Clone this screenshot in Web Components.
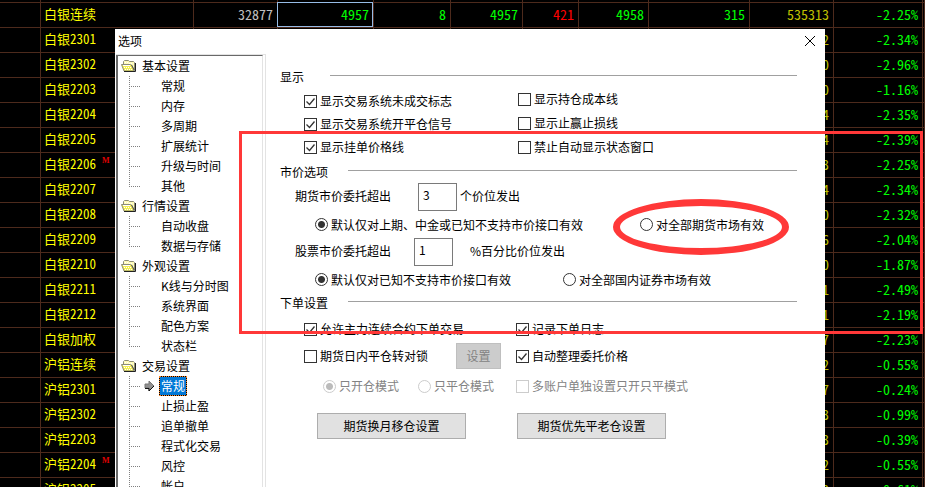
<!DOCTYPE html>
<html lang="zh-CN">
<head>
<meta charset="utf-8">
<meta name="viewport" content="width=device-width, initial-scale=1">
<title>选项</title>
<style>
  html, body { height: 100%; }
  body {
    margin: 0;
    position: relative;
    overflow: hidden;
    background: #000;
    color: #000;
    font: 12px/16px "Noto Sans CJK SC", sans-serif;
  }
  .mark-box {
    position: absolute;
    z-index: 3;
    box-sizing: border-box;
    inset: 131px 2px auto 239px;
    height: 203px;
    border: 3px solid #ff3838;
    pointer-events: none;
  }
</style>
</head>
<body>

<quote-table></quote-table>

<option-dialog heading="选项">
  <option-tree slot="nav"></option-tree>

  <option-group heading="显示" class="wide">
    <option-columns>
      <option-stack>
        <option-choice checked>显示交易系统未成交标志</option-choice>
        <option-choice checked>显示交易系统开平仓信号</option-choice>
        <option-choice checked>显示挂单价格线</option-choice>
      </option-stack>
      <option-stack loose>
        <option-choice>显示持仓成本线</option-choice>
        <option-choice>显示止赢止损线</option-choice>
        <option-choice>禁止自动显示状态窗口</option-choice>
      </option-stack>
    </option-columns>
  </option-group>

  <option-group heading="市价选项">
    <market-options></market-options>
  </option-group>

  <option-group heading="下单设置">
    <order-options></order-options>
  </option-group>
</option-dialog>

<div class="mark-box"></div>

<script>
(function() {
  // name, month, last digit of the open interest, change, main contract flag
  const QUOTES = [
    ['白银', '2301', '2', '-2.34%'],
    ['白银', '2302', '0', '-2.96%'],
    ['白银', '2203', '0', '-1.16%'],
    ['白银', '2204', '4', '-2.35%'],
    ['白银', '2205', '4', '-2.39%'],
    ['白银', '2206', '3', '-2.25%', true],
    ['白银', '2207', '4', '-2.34%'],
    ['白银', '2208', '0', '-2.32%'],
    ['白银', '2209', '6', '-2.04%'],
    ['白银', '2210', '0', '-1.87%'],
    ['白银', '2211', '1', '-2.49%'],
    ['白银', '2212', '1', '-2.19%'],
    ['白银加权', '', '7', '-2.23%'],
    ['沪铝连续', '', '2', '-0.55%'],
    ['沪铝', '2301', '7', '-0.24%'],
    ['沪铝', '2302', '3', '-0.99%'],
    ['沪铝', '2203', '3', '-0.39%'],
    ['沪铝', '2204', '2', '-0.55%', true],
    ['沪铝', '2205', '2', '-0.61%']
  ];

  const TREE = [
    ['基本设置', ['常规', '内存', '多周期', '扩展统计', '升级与时间', '其他']],
    ['行情设置', ['自动收盘', '数据与存储']],
    ['外观设置', ['K线与分时图', '系统界面', '配色方案', '状态栏']],
    ['交易设置', ['*常规', '止损止盈', '追单撤单', '程式化交易', '风控', '帐户']]
  ];

  function define(name, html, setup) {
    customElements.define(name, class extends HTMLElement {
      constructor() {
        super();
        this.attachShadow({ mode: 'open' });
      }

      connectedCallback() {
        this.shadowRoot.innerHTML = typeof html === 'function' ? html(this) : html;
        if (setup) setup(this, this.shadowRoot);
      }
    });
  }

  define('quote-table', () => {
    const rows = QUOTES.map(([name, month, oi, change, main]) => `
      <tr>
        <td></td>
        <td class="name">${name}${month}${main ? '<b>M</b>' : ''}</td>
        <td></td><td></td><td></td><td></td><td></td><td></td><td></td>
        <td class="oi">${oi}</td>
        <td>${change}</td>
        <td></td>
      </tr>`).join('');

    return `
      <style>
        :host { display: block; }
        table {
          width: 100%;
          table-layout: fixed;
          border-spacing: 0;
          color: #00ff00;
          font-size: 14px;
          line-height: 22px;
          font-feature-settings: "hwid";
        }
        td {
          box-sizing: border-box;
          height: 25px;
          padding: 0 4px 2px 3px;
          border: solid #4d2a1c;
          border-width: 0 1px 1px 0;
          text-align: right;
          white-space: nowrap;
        }
        td:first-child, td:last-child { padding: 0; }
        .edge td { height: 3px; }
        .name { text-align: left; color: #ffff00; font-size: 13px; }
        .name b {
          margin-left: 6px;
          color: #e00000;
          font: bold 8px/12px "Liberation Serif", serif;
          vertical-align: 6px;
        }
        .price { color: #c0c0c0; }
        .down { color: #ff0000; }
        .oi { color: #c0c000; }
        .current { position: relative; }
        .current::after {
          content: "";
          position: absolute;
          inset: -1px 0 0 -1px;
          border: 1px solid #97bce6;
        }
      </style>
      <table aria-label="行情">
        <colgroup>
          <col style="width: 41px"><col style="width: 153px"><col style="width: 84px">
          <col style="width: 96px"><col style="width: 77px"><col style="width: 72px">
          <col style="width: 56px"><col style="width: 70px"><col style="width: 101px">
          <col style="width: 84px"><col style="width: 89px"><col>
        </colgroup>
        <tr class="edge">${'<td></td>'.repeat(12)}</tr>
        <tr>
          <td></td>
          <td class="name">白银连续</td>
          <td class="price">32877</td>
          <td class="current">4957</td>
          <td>8</td>
          <td>4957</td>
          <td class="down">421</td>
          <td>4958</td>
          <td>315</td>
          <td class="oi">535313</td>
          <td>-2.25%</td>
          <td></td>
        </tr>
        ${rows}
      </table>`;
  });

  define('option-dialog', el => `
    <style>
      :host {
        position: absolute;
        z-index: 2;
        inset: 29px 100px 0 115px;
        display: flex;
        flex-direction: column;
        overflow: hidden;
        background: #fff;
      }
      header {
        box-sizing: border-box;
        display: flex;
        justify-content: space-between;
        align-items: center;
        height: 25px;
        flex: none;
        padding: 0 9px 2px 3px;
      }
      button { display: flex; padding: 0; border: 0; background: none; }
      .body { display: flex; flex: 1; min-height: 0; padding-left: 1px; }
      main { flex: 1; padding: 15px 28px 0 14px; }
    </style>
    <header>
      <span>${el.getAttribute('heading')}</span>
      <button type="button" aria-label="关闭">
        <svg width="12" height="12" viewBox="0 0 12 12" stroke="#000"><path d="M1 1l10 10M11 1L1 11"/></svg>
      </button>
    </header>
    <div class="body">
      <slot name="nav"></slot>
      <main><slot></slot></main>
    </div>`);

  const FOLDER = `
    <svg width="16" height="14" viewBox="0 0 16 14">
      <path fill="#fffbb8" stroke="#8c8c78" d="M2.500 6V2.500l1-1h4l1 1h4l1 1V11"/>
      <path fill="#f5f050" stroke="#8c8c78" d="M.5 5.500h9l1.500 1 2 5.500H3z"/>
      <path fill="#fff" shape-rendering="crispEdges" d="M4 3h1v1H4zM6 3h1v1H6zM8 4h1v1H8zM10 4h1v1h-1zM2 6h7v1H2zM3 8h1v1H3zM5 8h1v1H5zM7 8h1v1H7zM9 8h1v1H9zM4 10h1v1H4zM6 10h1v1H6zM8 10h1v1H8zM10 10h1v1h-1z"/>
      <path fill="none" stroke="#222" d="M3 12.500h11.500V4"/>
      <path fill="none" stroke="#555" d="M10.500 6l3 5.500"/>
    </svg>`;

  const ARROW = `
    <svg width="11" height="12" viewBox="0 0 11 12">
      <path d="M1 4h4V1l5 5-5 5V8H1z" fill="#909090" stroke="#777"/>
      <path d="M1 8.500h4V11l5-5" fill="none" stroke="#111"/>
    </svg>`;

  define('option-tree', () => `
    <style>
      :host {
        display: block;
        box-sizing: border-box;
        width: 150px;
        flex: none;
        border: solid #e3e3e3;
        border-width: 1px 1px 0 0;
        overflow: hidden;
      }
      nav {
        height: 100%;
        margin-right: 2px;
        border: solid #696969;
        border-width: 1px 1px 0 2px;
        border-right-color: #e3e3e3;
      }
      ul { margin: 0; padding: 0; list-style: none; }
      .group { display: flex; align-items: center; gap: 5px; height: 20px; padding-left: 3px; }
      .children { margin-left: 11px; }
      .children li { display: flex; align-items: center; height: 20px; }
      /* dotted elbow in front of each entry */
      .children li::before {
        content: "";
        align-self: flex-start;
        width: 10px;
        height: 10px;
        border: dotted #808080;
        border-width: 0 0 1px 1px;
      }
      .children li:not(:last-child) {
        background: repeating-linear-gradient(#808080 0 1px, transparent 1px 2px) 0 0 / 1px 100% no-repeat;
      }
      .pointer { width: 19px; display: flex; justify-content: center; }
      a { padding: 2px; color: inherit; text-decoration: none; }
      a[aria-current] {
        padding: 1px;
        border: 1px dotted #ff8728;
        background: linear-gradient(#0078d7 0 0) padding-box, #000;
        color: #fff;
      }
    </style>
    <nav><ul>${TREE.map(([name, items]) => `
      <li>
        <div class="group">${FOLDER}<span>${name}</span></div>
        <ul class="children">${items.map(item => {
          const on = item[0] === '*';
          return `<li><span class="pointer">${on ? ARROW : ''}</span><a href="#"${on ? ' aria-current="page"' : ''}>${item.replace('*', '')}</a></li>`;
        }).join('')}</ul>
      </li>`).join('')}
    </ul></nav>`);

  define('option-group', el => `
    <style>
      :host { display: block; }
      h2 {
        display: flex;
        align-items: center;
        gap: 20px;
        margin: 0;
        height: 16px;
        font: inherit;
      }
      h2::after { content: ""; flex: 1; height: 1px; margin-bottom: 3px; background: #a0a0a0; }
      :host(.wide) h2 { gap: 26px; }
    </style>
    <section><h2>${el.getAttribute('heading')}</h2><slot></slot></section>`);

  define('option-columns', `
    <style>
      :host {
        display: grid;
        grid-template-columns: 214px 1fr;
        align-items: end;
        padding: 6px 0 9px 24px;
      }
    </style>
    <slot></slot>`);

  define('option-stack', `
    <style>
      :host { display: flex; flex-direction: column; gap: 7px; }
      :host([loose]) { gap: 8px; }
    </style>
    <slot></slot>`);

  // check box by default, radio button with type="radio"
  define('option-choice', el => `
    <style>
      :host { display: flex; }
      label { display: flex; align-items: center; gap: 3px; white-space: nowrap; }
      input {
        appearance: none;
        box-sizing: border-box;
        width: 13px;
        height: 13px;
        margin: 0;
        border: 1px solid #333;
        background: #fff center / 11px no-repeat;
      }
      input[type=radio] { border-radius: 50%; }
      input[type=checkbox]:checked {
        background-image: url("data:image/svg+xml,%3Csvg xmlns='http://www.w3.org/2000/svg' viewBox='0 0 11 11'%3E%3Cpath d='M1.5 5.5l3 3 5-6' fill='none' stroke='%23333' stroke-width='1.3'/%3E%3C/svg%3E");
      }
      input[type=radio]:checked {
        background-image: radial-gradient(circle, #333 3px, transparent 4px);
      }
      :host([disabled]) { color: #838383; }
      input:disabled { border-color: #ccc; }
      input[type=radio]:disabled:checked {
        background-image: radial-gradient(circle, #bbb 3px, transparent 4px);
      }
    </style>
    <label>
      <input type="${el.getAttribute('type') || 'checkbox'}"
        ${el.hasAttribute('checked') ? 'checked' : ''} ${el.hasAttribute('disabled') ? 'disabled' : ''}>
      <slot></slot>
    </label>`, (el, root) => {
    const input = root.querySelector('input');
    input.addEventListener('change', () => {
      if (input.type !== 'radio') return;
      el.parentNode.querySelectorAll('option-choice[type=radio]').forEach(other => {
        if (other !== el) other.shadowRoot.querySelector('input').checked = false;
      });
    });
  });

  define('market-options', `
    <style>
      :host { display: block; padding: 3px 0 2px 15px; }
      .field { display: flex; align-items: center; height: 28px; }
      .field label { width: 123px; }
      .field label, .field span { padding-bottom: 3px; }
      .field.stock label { width: 119px; }
      input {
        box-sizing: border-box;
        width: 39px;
        height: 28px;
        margin-right: 3px;
        padding: 0 4px 6px;
        border: 1px solid #7a7a7a;
        font: inherit;
      }
      .stock input { margin-right: 17px; }
      .choices { display: flex; align-items: center; height: 27px; padding-left: 20px; }
      .futures.choices { justify-content: space-between; padding-right: 33px; }
      .securities { gap: 52px; }
      .ringed { position: relative; }
      .ringed::after {
        content: "";
        position: absolute;
        box-sizing: border-box;
        inset: -18px -25px -22px -27px;
        border: 7px solid #ff3838;
        border-radius: 50%;
        pointer-events: none;
      }
    </style>
    <div class="field">
      <label for="futures">期货市价委托超出</label>
      <input id="futures" value="3"><span>个价位发出</span>
    </div>
    <div class="choices futures">
      <option-choice type="radio" checked>默认仅对上期、中金或已知不支持市价接口有效</option-choice>
      <option-choice type="radio" class="ringed">对全部期货市场有效</option-choice>
    </div>
    <div class="field stock">
      <label for="stock">股票市价委托超出</label>
      <input id="stock" value="1"><span>%百分比价位发出</span>
    </div>
    <div class="choices securities">
      <option-choice type="radio" checked>默认仅对已知不支持市价接口有效</option-choice>
      <option-choice type="radio">对全部国内证券市场有效</option-choice>
    </div>`);

  define('order-options', `
    <style>
      :host { display: block; padding: 5px 0 0 24px; }
      .row { display: grid; grid-template-columns: 212px 1fr; align-items: center; height: 26px; }
      .row + .row { margin-top: 1px; }
      .pair { display: flex; align-items: center; justify-content: space-between; padding-right: 15px; }
      .row.modes { margin-top: 4px; }
      .modes .pair { justify-content: flex-start; gap: 19px; padding: 0 0 0 19px; }
      button {
        box-sizing: border-box;
        width: 149px;
        height: 26px;
        padding: 0 0 1px;
        border: 1px solid #adadad;
        background: #e1e1e1;
        color: #000;
        font: inherit;
      }
      button:disabled { width: 45px; border-color: #bfbfbf; background: #ccc; color: #838383; }
      .actions { display: flex; gap: 51px; padding: 14px 0 0 13px; }
    </style>
    <div class="row">
      <option-choice checked>允许主力连续合约下单交易</option-choice>
      <option-choice checked>记录下单日志</option-choice>
    </div>
    <div class="row">
      <div class="pair">
        <option-choice>期货日内平仓转对锁</option-choice>
        <button type="button" disabled>设置</button>
      </div>
      <option-choice checked>自动整理委托价格</option-choice>
    </div>
    <div class="row modes">
      <div class="pair">
        <option-choice type="radio" checked disabled>只开仓模式</option-choice>
        <option-choice type="radio" disabled>只平仓模式</option-choice>
      </div>
      <option-choice disabled>多账户单独设置只开只平模式</option-choice>
    </div>
    <div class="actions">
      <button type="button">期货换月移仓设置</button>
      <button type="button">期货优先平老仓设置</button>
    </div>`);
})();
</script>
</body>
</html>
